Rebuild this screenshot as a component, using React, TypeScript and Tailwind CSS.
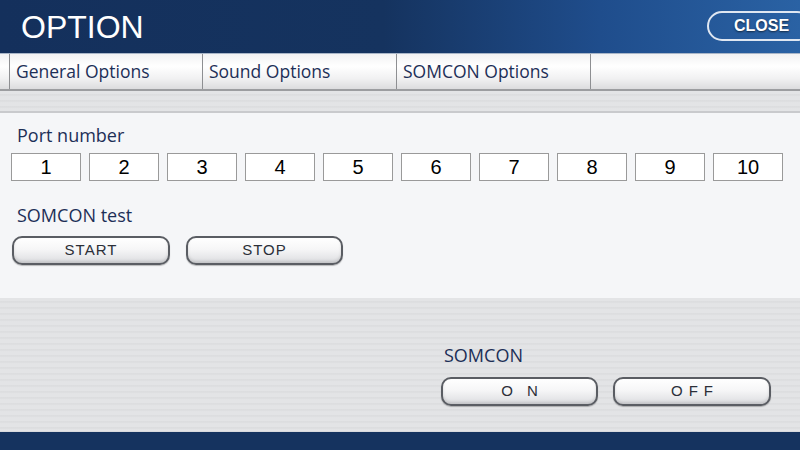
import React from "react";

const stripes =
  "bg-[repeating-linear-gradient(180deg,#e3e4e6_0px,#e3e4e6_3px,#d6d7d9_4px,#e6e7e9_5px,#dfe0e2_6px)]";

const label = "font-['Open_Sans',sans-serif] text-[#1d2f57] leading-none";

const GlossButton = ({ text, className }: { text: string; className?: string }) => (
  <button
    className={
      "h-[29px] rounded-[10px] border-2 border-[#5a5d63] bg-[linear-gradient(180deg,#ffffff_0%,#f6f6f7_45%,#dcdde0_100%)] shadow-[inset_0_-2px_3px_rgba(0,0,0,0.12),0_1px_1px_rgba(0,0,0,0.25)] text-[15px] text-[#2b2f38] " +
      (className ?? "")
    }
  >
    {text}
  </button>
);

const App = () => {
  const ports = [1, 2, 3, 4, 5, 6, 7, 8, 9, 10];
  return (
    <div className="w-[800px] h-[450px] flex flex-col overflow-hidden font-['Liberation_Sans',Arial,sans-serif]">
      {/* header */}
      <div className="h-[53px] shrink-0 flex items-center justify-between pl-[21px] bg-[linear-gradient(90deg,#14305c_0%,#15335f_48%,#1f4d8c_75%,#2a62a4_100%)]">
        <h1 className="text-[32px] text-white leading-none pt-[1px]">OPTION</h1>
        <button className="mr-[-12px] mt-[-2px] h-[30px] w-[105px] rounded-full border-2 border-[#dfe7f2] text-white font-bold text-[16px] pl-[4px] [text-shadow:0_1px_2px_rgba(0,0,0,0.6)]">
          CLOSE
        </button>
      </div>
      <div className="h-px bg-[#a9b6c8]" />

      {/* tabs */}
      <div className={"h-[37px] shrink-0 flex border-b-2 border-[#9c9da0] bg-[linear-gradient(180deg,#f2f2f3_0%,#ffffff_35%,#f1f1f2_70%,#dcdcde_100%)] text-[17.5px] " + label}>
        <div className="w-[10px] border-r border-[#8e8f92]" />
        <div className="w-[193px] border-r border-[#8e8f92] flex items-center pl-[6px]">General Options</div>
        <div className="w-[194px] border-r border-[#8e8f92] flex items-center pl-[6px]">Sound Options</div>
        <div className="w-[194px] border-r border-[#8e8f92] flex items-center pl-[6px]">SOMCON Options</div>
        <div className="flex-1" />
      </div>

      <div className={"h-[20px] shrink-0 " + stripes} />

      {/* main panel */}
      <div className="h-[187px] shrink-0 bg-[#f5f6f8] border-t-2 border-[#c9cacd] shadow-[0_2px_2px_rgba(0,0,0,0.18)] px-[11px] pt-[13px]">
        <div className={"text-[18px] pl-[6px] " + label}>Port number</div>
        <div className="mt-[9px] flex gap-[8px]">
          {ports.map((p) => (
            <div
              key={p}
              className="w-[70px] h-[28px] bg-white border border-[#9a9a9a] flex items-center justify-center text-[20px] text-black"
            >
              {p}
            </div>
          ))}
        </div>
        <div className={"mt-[25px] text-[18px] pl-[6px] " + label}>SOMCON test</div>
        <div className="mt-[12px] flex gap-[16px] pl-[1px]">
          <GlossButton text="START" className="w-[158px] tracking-[1px]" />
          <GlossButton text="STOP" className="w-[157px] tracking-[1px]" />
        </div>
      </div>

      {/* lower striped area */}
      <div className={"flex-1 flex flex-col items-end pr-[29px] pt-[48px] " + stripes}>
        <div className="w-[330px]">
          <div className={"text-[18px] pl-[3px] " + label}>SOMCON</div>
          <div className="mt-[13px] flex gap-[15px]">
            <GlossButton text="O N" className="w-[157px] tracking-[5px] pl-[5px] whitespace-pre" />
            <GlossButton text="OFF" className="w-[158px] tracking-[6px] pl-[6px]" />
          </div>
        </div>
      </div>

      {/* footer */}
      <div className="h-[19px] shrink-0 bg-[#15335f] border-t border-[#d8dadd]" />
    </div>
  );
};

export default App;
